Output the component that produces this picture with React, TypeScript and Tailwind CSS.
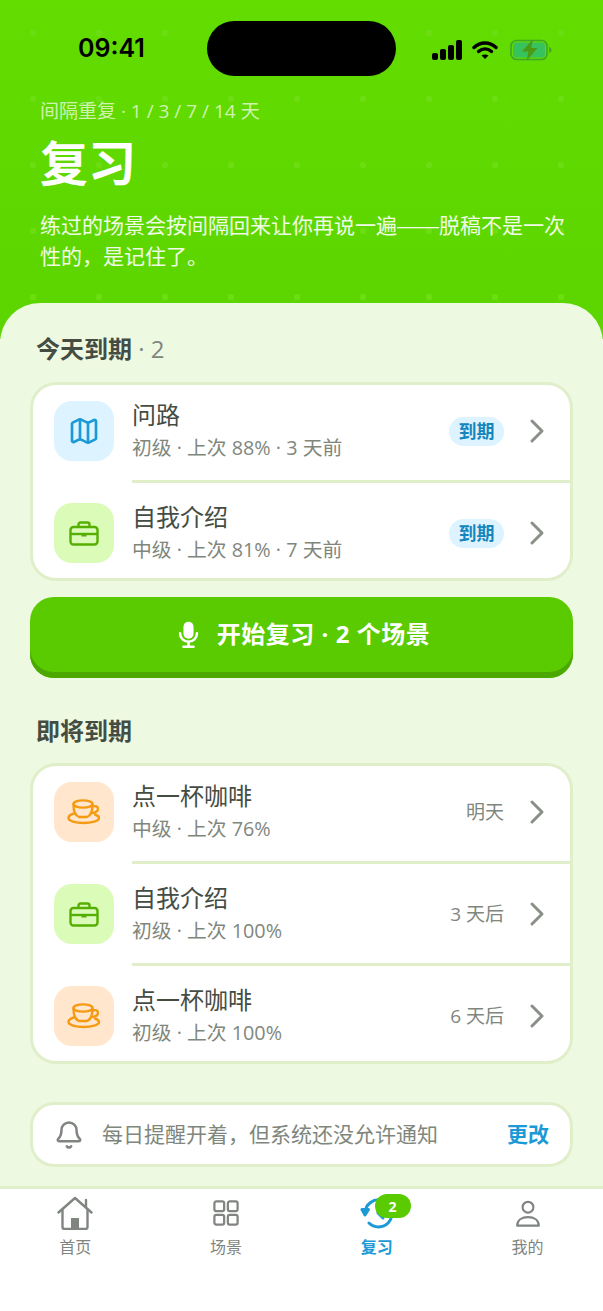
import { Bell, ChevronRight, Map as MapIcon } from "lucide-react";
import type { ReactNode } from "react";

const font = "font-['Open_Sans','Noto_Sans_CJK_SC',sans-serif]";

function Briefcase() {
  return (
    <svg width="30" height="25" viewBox="0 0 30 25" fill="none" stroke="#55AE00" strokeWidth="2.4" strokeLinejoin="round">
      <rect x="1.500" y="6" width="27" height="17.500" rx="3" />
      <path d="M9.500 6V3.500a2 2 0 0 1 2-2h7a2 2 0 0 1 2 2V6" />
      <path d="M1.500 13h27" />
      <rect x="12.500" y="12.500" width="5" height="3" fill="#55AE00" stroke="none" />
    </svg>
  );
}

function Coffee() {
  return (
    <svg width="34" height="26" viewBox="0 0 34 26" fill="none" stroke="#F59A13" strokeWidth="2.4" strokeLinecap="round" strokeLinejoin="round">
      <ellipse cx="16" cy="5" rx="9.500" ry="3.600" />
      <path d="M6.500 5.500c0 5 1.500 11 5.500 12.500h8c4-1.500 5.500-7.500 5.500-12.500" />
      <path d="M25.500 7.500c3-1 5.500 0 5.500 2.300 0 2.600-3 4-6.500 4.200" />
      <path d="M7 14.500C3.500 15.500 1.500 17 1.500 19c0 3 7 5 15 5s15.500-2 15.500-5c0-1.500-1.500-2.600-4-3.500" />
    </svg>
  );
}

function Row({ icon, tint, title, sub, right, first, last }: { icon: ReactNode; tint: string; title: string; sub: string; right: ReactNode; first?: boolean; last?: boolean }) {
  return (
    <>
      <div className={`flex items-center pl-[21px] pr-[13px] ${first ? "pt-4" : "pt-5"} ${last ? "pb-[15px]" : "pb-[19px]"}`}>
        <div className={`flex h-[60px] w-[60px] shrink-0 items-center justify-center rounded-[18px] ${tint}`}>{icon}</div>
        <div className="-mt-[2px] ml-[18px] flex h-[60px] flex-1 flex-col justify-between">
          <div className="h-[30px] text-[24px] leading-[30px] text-[#454D43]">{title}</div>
          <div className="h-[25px] text-[19.8px] leading-[25px] text-[#7F877D]">{sub}</div>
        </div>
        {right}
        <ChevronRight className="ml-[13px] text-[#8A9088]" size={40} strokeWidth={1.8} />
      </div>
      {!last && <div className="ml-[99px] h-[3px] bg-[#E0EFCA]" />}
    </>
  );
}

function Due() {
  return <span className="flex h-[29px] w-[55px] items-center justify-center rounded-full bg-[#DDF3FF] text-[18px] font-bold text-[#1585BE]">到期</span>;
}

function When({ children }: { children: string }) {
  return <span className="text-[19px] text-[#7F877D]">{children}</span>;
}

function NavItem({ label, active, children }: { label: string; active?: boolean; children: ReactNode }) {
  return (
    <div className="relative flex flex-1 flex-col items-center">
      <div className="flex h-[36px] items-center justify-center">{children}</div>
      <span className={`mt-[5px] h-[22px] text-[16px] leading-[22px] ${active ? "font-bold text-[#1C9AD6]" : "text-[#808580]"}`}>{label}</span>
    </div>
  );
}

export default function App() {
  return (
    <div className={`${font} flex h-[1311px] w-[603px] flex-col overflow-hidden bg-white`}>
      <div className="relative h-[339px] shrink-0 bg-[radial-gradient(circle,#6CDD12_3px,transparent_3.5px),linear-gradient(#63DC00,#5CD500)] bg-[size:66px_66px,100%_100%] px-10 pt-[96px]">
        <div className="absolute left-[78px] top-[30px] font-['Inter',sans-serif] text-[25px] font-semibold leading-[36px] text-black">09:41</div>
        <div className="absolute left-[207px] top-[21px] h-[55px] w-[189px] rounded-full bg-black" />
        <div className="absolute left-[432px] top-[39px] flex items-center gap-[10px]">
          <svg width="30" height="20" viewBox="0 0 30 20" fill="#000">
            <rect x="0" y="13" width="6" height="7" rx="2" />
            <rect x="8" y="9" width="6" height="11" rx="2" />
            <rect x="16" y="5" width="6" height="15" rx="2" />
            <rect x="24" y="0" width="6" height="20" rx="2" />
          </svg>
          <svg width="26" height="20" viewBox="0 0 26 20" fill="none" stroke="#000" strokeWidth="3.400" strokeLinecap="round">
            <path d="M2 7.500c6.500-6 15.500-6 22 0" />
            <path d="M6.500 11.500c4-3.400 9-3.400 13 0" />
            <path d="M13 19l-3.500-3.500c2-1.500 5-1.500 7 0z" fill="#000" stroke="none" />
          </svg>
          <svg width="42" height="22" viewBox="0 0 42 22" className="ml-[2px]">
            <rect x="1" y="1.500" width="36" height="19" rx="5.500" fill="none" stroke="#3FA52B" strokeWidth="1.600" />
            <rect x="3" y="3.500" width="32" height="15" rx="3.500" fill="#38C25E" />
            <path d="M39 8v6c1.500-.5 2.500-1.500 2.500-3s-1-2.500-2.500-3z" fill="#3FA52B" />
            <path d="M23 0 12 12.500h6.500L16.500 22l11-13h-6.500z" fill="#4A9A14" />
          </svg>
        </div>
        <div className="h-[30px] text-[19px] leading-[30px] text-white/70">间隔重复 · 1 / 3 / 7 / 14 天</div>
        <h1 className="mt-[5px] h-[64px] text-[48px] font-bold leading-[64px] text-white">复习</h1>
        <p className="mt-[15px] w-[530px] font-['Liberation_Sans','Noto_Sans_CJK_SC',sans-serif] text-[21px] leading-[31px] text-white/90">
          练过的场景会按间隔回来让你再说一遍——脱稿不是一次性的，是记住了。
        </p>
      </div>

      <div className="relative -mt-[36px] flex min-h-0 flex-1 flex-col rounded-t-[40px] bg-[#EEF9E2] px-[30px] pt-[28px]">
        <div className="h-[36px] pl-[6px] text-[24px] font-bold leading-[36px] text-[#454D43]">
          今天到期<span className="font-normal text-[#7F877D]"> · 2</span>
        </div>
        <div className="mt-[15px] rounded-[26px] border-[3px] border-[#E0EFCA] bg-white">
          <Row first icon={<MapIcon size={32} color="#1C9AD6" strokeWidth={2} />} tint="bg-[#DDF3FF]" title="问路" sub="初级 · 上次 88% · 3 天前" right={<Due />} />
          <Row last icon={<Briefcase />} tint="bg-[#DAFCB8]" title="自我介绍" sub="中级 · 上次 81% · 7 天前" right={<Due />} />
        </div>

        <div className="mt-4 flex h-[81px] shrink-0 items-center justify-center gap-[18px] rounded-[24px] bg-[#5ACB00] pb-[7px] pl-[5px] text-[24px] font-bold tracking-[0.5px] text-white shadow-[inset_0_-6px_0_#4AA800]">
          <svg width="21" height="27" viewBox="0 0 24 32" fill="none" stroke="#fff" strokeWidth="3" strokeLinecap="round">
            <rect x="6" y="1" width="12" height="20" rx="6" fill="#fff" stroke="none" />
            <path d="M2 14.500c0 6 4.500 10 10 10s10-4 10-10" />
            <path d="M12 25v5M6 30.500h12" />
          </svg>
          开始复习 · 2 个场景
        </div>

        <div className="mt-[35px] h-[36px] pl-[6px] text-[24px] font-bold leading-[36px] text-[#454D43]">即将到期</div>
        <div className="mt-[14px] rounded-[26px] border-[3px] border-[#E0EFCA] bg-white">
          <Row first icon={<Coffee />} tint="bg-[#FFE6CC]" title="点一杯咖啡" sub="中级 · 上次 76%" right={<When>明天</When>} />
          <Row icon={<Briefcase />} tint="bg-[#DAFCB8]" title="自我介绍" sub="初级 · 上次 100%" right={<When>3 天后</When>} />
          <Row last icon={<Coffee />} tint="bg-[#FFE6CC]" title="点一杯咖啡" sub="初级 · 上次 100%" right={<When>6 天后</When>} />
        </div>

        <div className="mt-[38px] flex h-[65px] shrink-0 items-center rounded-[24px] border-[3px] border-[#E0EFCA] bg-white pl-[21px] pr-[21px]">
          <Bell size={30} color="#808580" strokeWidth={2} />
          <span className="ml-[18px] flex-1 text-[21px] text-[#7F877D]">每日提醒开着，但系统还没允许通知</span>
          <span className="text-[21px] font-bold text-[#1C9AD6]">更改</span>
        </div>
      </div>

      <div className="relative flex h-[125px] shrink-0 border-t-[3px] border-[#E0EFCA] bg-white pt-[6px]">
        <NavItem label="首页">
          <svg width="36" height="34" viewBox="0 0 36 34" fill="none" stroke="#808580" strokeWidth="2.400" strokeLinejoin="round" strokeLinecap="round">
            <path d="M1.500 16.500 18 2l16.500 14.500" />
            <path d="M5.500 14v17a2 2 0 0 0 2 2h21a2 2 0 0 0 2-2V14" />
            <path d="M29 11V4" />
            <rect x="14" y="22" width="8" height="11" fill="#808580" stroke="none" />
          </svg>
        </NavItem>
        <NavItem label="场景">
          <svg width="26" height="26" viewBox="0 0 28 28" fill="none" stroke="#808580" strokeWidth="2.400">
            <rect x="1.500" y="1.500" width="10.500" height="10.500" rx="2" />
            <rect x="16" y="1.500" width="10.500" height="10.500" rx="2" />
            <rect x="1.500" y="16" width="10.500" height="10.500" rx="2" />
            <rect x="16" y="16" width="10.500" height="10.500" rx="2" />
          </svg>
        </NavItem>
        <NavItem label="复习" active>
          <svg width="34" height="32" viewBox="0 0 34 32" fill="none" stroke="#1C9AD6" strokeWidth="3" strokeLinecap="round" strokeLinejoin="round">
            <path d="M5 16A13.500 13.500 0 1 1 9 26" />
            <path d="M2 12.500h6.500L5 18z" fill="#1C9AD6" />
            <path d="M18 9v7l5 5" />
          </svg>
          <span className="absolute left-[73px] top-[-1px] flex h-[24px] w-[36px] items-center justify-center rounded-full bg-[#5ACB00] text-[14px] font-bold text-white">2</span>
        </NavItem>
        <NavItem label="我的">
          <svg width="26" height="27" viewBox="0 0 28 30" fill="none" stroke="#808580" strokeWidth="2.400">
            <circle cx="14" cy="8" r="6" />
            <path d="M2 28.500c0-6 5-9.500 12-9.500s12 3.500 12 9.500z" strokeLinejoin="round" />
          </svg>
        </NavItem>
      </div>
    </div>
  );
}
